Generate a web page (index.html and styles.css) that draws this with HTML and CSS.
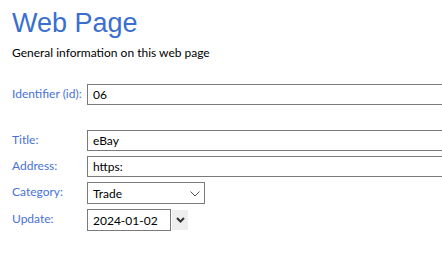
FILE: index.html
```html
<!DOCTYPE html>
<html lang="en">
<head>
  <meta charset="UTF-8" />
  <title>Web Page</title>
  <link rel="stylesheet" href="styles.css">
</head>
<body>

<header class="page-head">
  <h1>Web Page</h1>
  <p class="subtitle">General information on this web page</p>
</header>

<form class="record">
  <div class="row row-id">
    <label for="f-id">Identifier (id):</label>
    <input id="f-id" class="field wide" type="text" value="06">
  </div>

  <div class="row">
    <label for="f-title">Title:</label>
    <input id="f-title" class="field wide" type="text" value="eBay">
  </div>
  <div class="row">
    <label for="f-address">Address:</label>
    <input id="f-address" class="field wide" type="text" value="https:">
  </div>
  <div class="row">
    <label for="f-cat">Category:</label>
    <div class="select-wrap">
      <select id="f-cat" class="field select">
        <option>Trade</option>
      </select>
      <svg class="chev" width="10" height="6" viewBox="0 0 10 6"><path d="M0.5 0.5 L5 5 L9.5 0.5" fill="none" stroke="#555" stroke-width="1"/></svg>
    </div>
  </div>
  <div class="row">
    <label for="f-upd">Update:</label>
    <div class="date-wrap">
      <input id="f-upd" class="field date" type="text" value="2024-01-02">
      <span class="date-btn">
        <svg width="9" height="6" viewBox="0 0 9 6"><path d="M1 1 L4.5 4.5 L8 1" fill="none" stroke="#333" stroke-width="2"/></svg>
      </span>
    </div>
  </div>
</form>

</body>
</html>
```

FILE: styles.css
```css
* {
  box-sizing: border-box;
}

html, body {
  overflow: hidden;
}

body {
  margin: 0;
  padding: 8px 12px;
  background: #fff;
  color: #000;
  font-family: Lato, "Noto Sans", sans-serif;
  font-size: 12px;
}

.page-head h1 {
  margin: 0;
  font-family: "Liberation Sans", Arial, sans-serif;
  font-weight: normal;
  font-size: 27px;
  line-height: 30px;
  color: #3a6fd0;
}

.subtitle {
  margin: 7px 0 0;
  font-size: 12px;
  line-height: 16px;
}

.record {
  margin-top: 23px;
  display: flex;
  flex-direction: column;
  gap: 5px;
}

.row {
  display: grid;
  grid-template-columns: 75px auto;
  align-items: start;
}

.row-id {
  margin-bottom: 20px;
}

.row label {
  color: #4872d8;
  font-size: 12px;
  line-height: 16px;
  padding-top: 2px;
  white-space: nowrap;
}

.field {
  height: 21px;
  border: 1px solid #7a7a7a;
  border-radius: 0;
  padding: 0 5px;
  font-family: Lato, "Noto Sans", sans-serif;
  font-size: 12px;
  color: #000;
  background: #fff;
  outline: none;
}

.wide {
  width: 400px;
}

.select-wrap {
  position: relative;
  width: 118px;
}

.select {
  appearance: none;
  -webkit-appearance: none;
  width: 118px;
  height: 22px;
  padding-left: 5px;
}

.chev {
  position: absolute;
  right: 5px;
  top: 9px;
}

.date-wrap {
  display: flex;
  align-items: stretch;
  gap: 1px;
}

.date {
  width: 84px;
  height: 22px;
}

.date-btn {
  width: 16px;
  height: 20px;
  margin-top: 1px;
  background: #eeeeee;
  display: flex;
  align-items: center;
  justify-content: center;
}
```
